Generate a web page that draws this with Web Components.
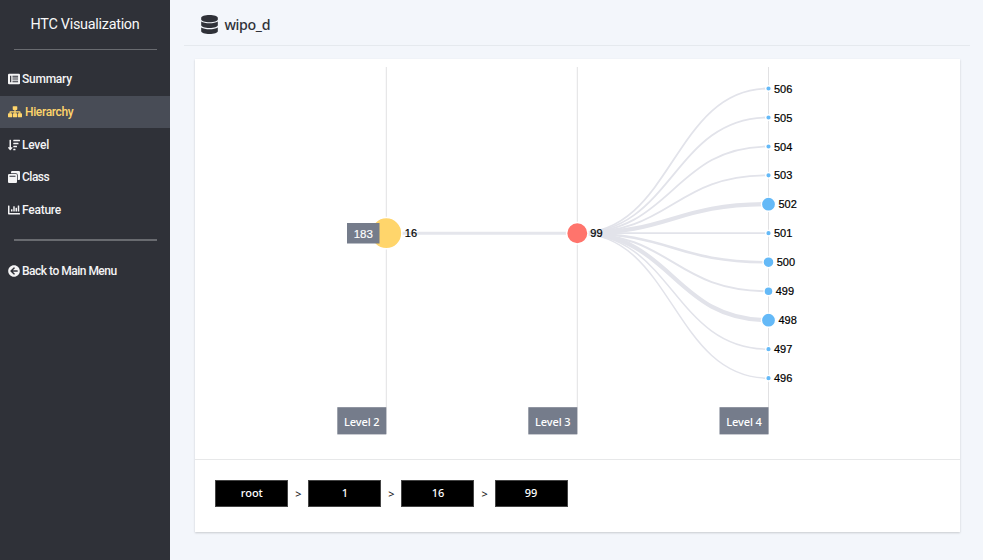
<!DOCTYPE html>
<html lang="en"><head><meta charset="utf-8"><title>HTC Visualization</title>
<style>
html,body{margin:0;height:100%}
body{font-family:"Open Sans","Noto Sans",sans-serif;overflow:hidden}
</style></head><body>
<htc-app></htc-app>
<script>
const define=(name,html,after)=>customElements.define(name,class extends HTMLElement{
  constructor(){super();this.attachShadow({mode:'open'}).innerHTML=html;}
  connectedCallback(){if(after)after(this,this.shadowRoot);}
});
const icons={
 list:['0 0 512 512','<path fill-rule="evenodd" d="M48 32h416a48 48 0 0 1 48 48v352a48 48 0 0 1-48 48H48a48 48 0 0 1-48-48V80a48 48 0 0 1 48-48zM88 120v272h50V120zM190 120v40h240v-40zM190 197v40h240v-40zM190 274v40h240v-40zM190 351v40h240v-40z"/>'],
 sitemap:['0 0 640 512','<rect x="216" width="208" height="176" rx="32"/><rect y="328" width="192" height="184" rx="32"/><rect x="224" y="328" width="192" height="184" rx="32"/><rect x="448" y="328" width="192" height="184" rx="32"/><path d="M290 160h60v70h184q40 0 40 40v80h-60v-60H350v60h-60v-60H126v60H66v-80q0-40 40-40h184z"/>'],
 sort:['0 0 512 512','<path d="M16 352h48V48q0-16 16-16h32q16 0 16 16v304h48c14 0 21 17 11 27l-80 96q-11 9-22 0L5 379c-10-10-4-27 11-27zM240 32h256q16 0 16 16v32q0 16-16 16H240q-16 0-16-16V48q0-16 16-16zM240 160h192q16 0 16 16v32q0 16-16 16H240q-16 0-16-16v-32q0-16 16-16zM240 288h128q16 0 16 16v32q0 16-16 16H240q-16 0-16-16v-32q0-16 16-16zM240 416h64q16 0 16 16v32q0 16-16 16h-64q-16 0-16-16v-32q0-16 16-16z"/>'],
 clone:['0 0 512 512','<path fill-rule="evenodd" d="M512 48v288a48 48 0 0 1-48 48h-48V176a80 80 0 0 0-80-80H128V48a48 48 0 0 1 48-48h288a48 48 0 0 1 48 48zM384 176v288a48 48 0 0 1-48 48H48a48 48 0 0 1-48-48V176a48 48 0 0 1 48-48h288a48 48 0 0 1 48 48zM64 202v46h256v-46z"/>'],
 chart:['0 0 512 512','<path d="M332.800 320h38.400q12.800 0 12.800-12.800V172.800q0-12.800-12.800-12.800h-38.400q-12.800 0-12.800 12.800v134.400q0 12.800 12.800 12.800zm96 0h38.400q12.800 0 12.800-12.800V76.800Q480 64 467.200 64h-38.400Q416 64 416 76.800v230.400q0 12.800 12.800 12.800zm-288 0h38.400q12.800 0 12.800-12.800v-70.400q0-12.800-12.800-12.800h-38.400q-12.800 0-12.800 12.800v70.400q0 12.800 12.800 12.800zm96 0h38.400q12.800 0 12.800-12.800V108.800Q288 96 275.200 96h-38.400Q224 96 224 108.800v198.400q0 12.800 12.800 12.800zM496 384H64V80q0-16-16-16H16Q0 64 0 80v336c0 17.700 14.300 32 32 32h464q16 0 16-16v-32q0-16-16-16z"/>'],
 back:['0 0 512 512','<path d="M256 504C119 504 8 393 8 256S119 8 256 8s248 111 248 248-111 248-248 248zm28.900-143.600L209.400 288H392c13.300 0 24-10.700 24-24v-16c0-13.300-10.700-24-24-24H209.400l75.500-72.400c9.700-9.300 9.900-24.800.4-34.300l-11-10.900c-9.400-9.400-24.600-9.400-33.900 0L107.700 239c-9.400 9.400-9.400 24.600 0 33.900l132.700 132.700c9.400 9.400 24.600 9.400 33.900 0l11-10.900c9.500-9.500 9.300-25-.4-34.300z"/>'],
 db:['0 0 448 512','<path d="M448 73.143v45.714C448 159.143 347.667 192 224 192S0 159.143 0 118.857V73.143C0 32.857 100.333 0 224 0s224 32.857 224 73.143zM448 176v102.857C448 319.143 347.667 352 224 352S0 319.143 0 278.857V176c48.125 33.143 136.208 48.572 224 48.572S399.874 209.143 448 176zm0 160v102.857C448 479.143 347.667 512 224 512S0 479.143 0 438.857V336c48.125 33.143 136.208 48.572 224 48.572S399.874 369.143 448 336z"/>']
};
define('htc-icon','<style>:host{display:inline-flex;flex:none}span{display:flex;width:100%}svg{display:block;height:100%;width:100%;fill:currentColor}</style><span></span>',(h,r)=>{
 const icon=icons[h.getAttribute('name')];if(!icon)return;
 r.querySelector('span').innerHTML=`<svg viewBox="${icon[0]}">${icon[1]}</svg>`;});
define('nav-item',`<style>:host{display:flex;align-items:center;height:32.7px;padding-left:8px;color:#f4f4f5;font:500 12px/16px Roboto,sans-serif;white-space:nowrap}
:host([active]){background:#484c56;color:#ffd56b}htc-icon{width:12px;height:12px;margin-right:2px}:host([active]) htc-icon{width:14px;height:11.500px;margin-right:3px}
span{letter-spacing:var(--track,-.25px)}</style><htc-icon></htc-icon><span><slot></slot></span>`,(h,r)=>{
 const old=r.querySelector('htc-icon'),n=document.createElement('htc-icon');n.setAttribute('name',h.getAttribute('icon'));old.replaceWith(n);});
define('side-bar',`<style>:host{display:flex;flex-direction:column;box-sizing:border-box;width:170px;height:560px;background:#2f3138;font-family:Roboto,sans-serif}
h1{margin:15px 0 0;font:400 14.400px/20px Roboto,sans-serif;color:#f8f8f8;text-align:center;letter-spacing:-.27px;height:20px}
hr{box-sizing:border-box;width:143px;height:1.500px;margin:13.500px 0 13px 14px;border:0;background:#696b70;flex:none}
hr.b{margin-top:13px;margin-bottom:13.500px}</style>
<h1>HTC Visualization</h1><hr>
<nav><nav-item icon="list">Summary</nav-item><nav-item icon="sitemap" active style="--track:-.35px">Hierarchy</nav-item><nav-item icon="sort">Level</nav-item><nav-item icon="clone" style="--track:-.5px">Class</nav-item><nav-item icon="chart">Feature</nav-item></nav>
<hr class="b"><nav-item icon="back" style="--track:-.5px">Back to Main Menu</nav-item>`);
define('page-header',`<style>:host{display:flex;align-items:center;box-sizing:border-box;height:46px;margin:0 13px 0 14px;padding:3px 0 0 17px;border-bottom:1px solid #e5e9ee;color:#2f3138;font:500 14.200px/20px "Noto Sans",sans-serif}
htc-icon{width:17px;height:19px;margin-right:6.500px}span{letter-spacing:-.35px;position:relative;top:1px}</style><htc-icon name="db"></htc-icon><span><slot></slot></span>`);
define('path-trail',`<style>:host{display:flex;align-items:center;box-sizing:border-box;height:73px;border-top:1px solid #e7e8e9;padding:0 0 5px 20.300px;font:500 11px/16px "Noto Sans",sans-serif}
b{box-sizing:border-box;width:73px;height:27px;border:1px solid #444;background:#000;color:#fff;font-weight:500;text-align:center;line-height:24px}i{width:20.100px;text-align:center;font-style:normal;color:#222}</style><b>root</b><i>&gt;</i><b>1</b><i>&gt;</i><b>16</b><i>&gt;</i><b>99</b>`);
define('tree-chart',`<style>:host{display:block;height:400px}svg{display:block}text{font:11px "Liberation Sans",Arial,sans-serif;fill:#000;stroke:#000;stroke-width:.2px}.level,.tag{fill:#fff;stroke:none}.level{font:500 11px "Noto Sans",sans-serif}.tag{font-size:11.500px;stroke:#fff;stroke-width:.15px}</style><div></div>`,(h,r)=>{
 let s='<svg width="765" height="400" viewBox="195 59 765 400">';
 const xs=[386.300,577.300,768.500];
 xs.forEach(x=>s+=`<path d="M${x} 67V434" stroke="#e1e1e3"/>`);
 s+='<path d="M386 233.200H577" stroke="#e5e6ec" stroke-width="3"/>';
 const nodes=[[506,88.500,2,1.800],[505,117.500,2,1.800],[504,146.500,2,1.800],[503,175.300,2,1.800],[502,204.200,6.300,4.200],[501,233.200,2,1.800],[500,262.200,4.700,2.600],[499,291.200,3.700,2],[498,320.200,6.300,4.200],[497,349.200,2,1.500],[496,378.200,2,1.500]];
 nodes.forEach(([t,y,q,w])=>s+=`<path d="M577.300 233.200C672.900 233.200 672.900 ${y} 768.500 ${y}" fill="none" stroke="#e2e3ea" stroke-width="${w}"/>`);
 s+='<circle cx="386.300" cy="233.200" r="15.600" fill="#ffd56b" stroke="#fff" stroke-width="1.500"/><circle cx="577.300" cy="233.200" r="10.700" fill="#ff746c" stroke="#fff" stroke-width="1.500"/>';
 nodes.forEach(([t,y,q])=>s+=`<circle cx="768.500" cy="${y}" r="${q+.8}" fill="#64b9f7" stroke="#fff" stroke-width="1.400"/><text x="${q<3?773.900:q<4?775.700:q<5?776.700:778.400}" y="${y+4}">${t}</text>`);
 s+='<text x="404.800" y="237.300">16</text><text x="590.300" y="237.300">99</text><rect x="347" y="223" width="32.500" height="20.500" fill="#757c8b"/><text class="tag" x="353.700" y="237.500">183</text>';
 xs.forEach((x,i)=>s+=`<rect x="${x-49}" y="407.200" width="49" height="27.200" fill="#757c8b"/><text class="level" x="${x-42.200}" y="426" textLength="35.500">Level ${i+2}</text>`);
 r.querySelector('div').innerHTML=s+'</svg>';});
define('htc-app',`<style>:host{display:flex;height:560px;background:#f3f6fb}main{flex:1;min-width:0}section{margin:13px 23px 0 25px;background:#fff;box-shadow:0 1px 2px #0000002e}</style>
<side-bar></side-bar><main><page-header>wipo_d</page-header><section><tree-chart></tree-chart><path-trail></path-trail></section></main>`);
</script></body></html>
